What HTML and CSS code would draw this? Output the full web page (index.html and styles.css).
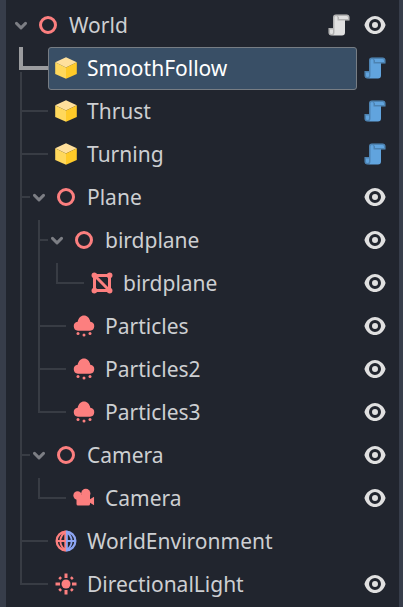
FILE: index.html
```html
<!DOCTYPE html>
<html lang="en">
<head>
<meta charset="utf-8">
<title>Scene tree</title>
<link rel="stylesheet" href="styles.css">
</head>
<body>
<svg class="defs" aria-hidden="true">
  <symbol id="chevron" viewBox="0 0 12 12"><path d="M1.5 3.4 6 7.9l4.500-4.500" fill="none" stroke="#7c7e84" stroke-width="2.900" stroke-linecap="round" stroke-linejoin="round"/></symbol>
  <symbol id="spatial" viewBox="0 0 16 16"><circle cx="8" cy="8" r="5" fill="none" stroke="#fc7f7f" stroke-width="2"/></symbol>
  <symbol id="cube" viewBox="0 0 16 16"><path d="M8 .9 15.200 4.200 8 7.700.8 4.200z" fill="#ffe09c"/><path d="M.8 4.200 8 7.700v7.500L.8 12z" fill="#ffd85c"/><path d="M15.200 4.200 8 7.700v7.500l7.200-3.200z" fill="#ffca28"/></symbol>
  <symbol id="eye" viewBox="0 0 16 16"><path fill="#e0e0e0" d="M8 2C5.443 2 2.209 3.948 1.045 7.705a1 1 0 0 0-.01.56C2.165 12.190 5.385 14 8 14s5.835-1.809 6.965-5.736a1 1 0 0 0 0-.55C13.861 3.935 10.554 2 8 2zm0 2a4 4 0 0 1 0 8 4 4 0 0 1 0-8zm0 2a2 2 0 0 0 0 4 2 2 0 0 0 0-4z"/></symbol>
  <symbol id="script" viewBox="0 0 16 16"><path fill="currentColor" d="M6 1a2 2 0 0 0-2 2v7H1v3a2 2 0 0 0 2 2h7a2 2 0 0 0 2-2V5h3V3a2 2 0 0 0-2-2z"/><path class="fold" fill-rule="evenodd" d="M6 1a2 2 0 0 0-2 2v7H1v3a2 2 0 0 0 4 0V3a1 1 0 0 1 2 0v2h8V3a2 2 0 0 0-2-2zm1 1h6a1 1 0 0 1 1 1v1H8V3a2 2 0 0 0-1-1zM2 11h2v2a1 1 0 0 1-2 0z"/></symbol>
  <symbol id="mesh" viewBox="0 0 16 16"><path fill="#fc7f7f" d="m3 1a2 2 0 0 0-2 2 2 2 0 0 0 1 1.730v6.541a2 2 0 0 0-1 1.729 2 2 0 0 0 2 2 2 2 0 0 0 1.730-1h6.541a2 2 0 0 0 1.729 1 2 2 0 0 0 2-2 2 2 0 0 0-1-1.730v-6.541a2 2 0 0 0 1-1.729 2 2 0 0 0-2-2 2 2 0 0 0-1.730 1h-6.541a2 2 0 0 0-1.729-1zm2.414 3h5.857a2 2 0 0 0 .729.730v5.856zm-1.414 1.414 6.586 6.586h-5.856a2 2 0 0 0-.730-.730z"/></symbol>
  <symbol id="particles" viewBox="0 0 16 16"><g fill="#fc7f7f"><path d="M8 1C5.900 1 4.300 2.700 3.800 5.100A3.070 3.070 0 0 0 4 11.200h8a3.070 3.070 0 0 0 .2-6.100C11.700 2.700 10.100 1 8 1z"/><circle cx="4" cy="13" r="1"/><circle cx="8" cy="14" r="1"/><circle cx="12" cy="13" r="1"/></g></symbol>
  <symbol id="camera" viewBox="0 0 16 16"><g fill="#fc7f7f"><circle cx="9.200" cy="5" r="3.100"/><circle cx="3.700" cy="6.300" r="2.800"/><path d="M3 6h9v2.900l2.700-1.700v5.600L12 11.200V12a1 1 0 0 1-1 1H4a1 1 0 0 1-1-1z"/></g></symbol>
  <symbol id="environment" viewBox="0 0 16 16"><g fill="none" stroke-width="1.500"><path stroke="#fc7f7f" d="M8 1.750a6.250 6.250 0 0 0 0 12.500"/><path stroke="#8da5f3" d="M8 1.750a6.250 6.250 0 0 1 0 12.500"/><g stroke-width="1.250"><path stroke="#fc7f7f" d="M8 1.600C3 5 3 11 8 14.400M2 8h6M7.500 1.100v13.800"/><path stroke="#8da5f3" d="M8 1.600c5 3.400 5 9.400 0 12.800M8 8h6M8.600 1.100v13.800"/></g></g></symbol>
  <symbol id="light" viewBox="0 0 16 16"><g fill="#fc7f7f" stroke="#fc7f7f"><circle cx="8" cy="8" r="3" stroke="none"/><path stroke-width="2" d="M8 1v3M8 12v3M1 8h3M12 8h3"/><path stroke-width="1.800" d="M3.500 3.500l1.200 1.200M11.300 11.300l1.200 1.200M3.500 12.500l1.200-1.200M11.300 4.700l1.200-1.200"/></g></symbol>
</svg>
<main class="panel">
<ul class="tree">
  <li class="node">
    <div class="row"><svg class="toggle"><use href="#chevron"/></svg><div class="item"><svg class="icon"><use href="#spatial"/></svg><span class="name">World</span></div><div class="actions"><svg class="icon"><use href="#script"/></svg><svg class="icon"><use href="#eye"/></svg></div></div>
    <ul class="children">
      <li class="node active">
        <div class="row"><span class="toggle"></span><div class="item selected"><svg class="icon"><use href="#cube"/></svg><span class="name">SmoothFollow</span></div><div class="actions"><svg class="icon blue"><use href="#script"/></svg></div></div>
      </li>
      <li class="node">
        <div class="row"><span class="toggle"></span><div class="item"><svg class="icon"><use href="#cube"/></svg><span class="name">Thrust</span></div><div class="actions"><svg class="icon blue"><use href="#script"/></svg></div></div>
      </li>
      <li class="node">
        <div class="row"><span class="toggle"></span><div class="item"><svg class="icon"><use href="#cube"/></svg><span class="name">Turning</span></div><div class="actions"><svg class="icon blue"><use href="#script"/></svg></div></div>
      </li>
      <li class="node parent">
        <div class="row"><svg class="toggle"><use href="#chevron"/></svg><div class="item"><svg class="icon"><use href="#spatial"/></svg><span class="name">Plane</span></div><div class="actions"><svg class="icon"><use href="#eye"/></svg></div></div>
        <ul class="children">
          <li class="node parent">
            <div class="row"><svg class="toggle"><use href="#chevron"/></svg><div class="item"><svg class="icon"><use href="#spatial"/></svg><span class="name">birdplane</span></div><div class="actions"><svg class="icon"><use href="#eye"/></svg></div></div>
            <ul class="children">
              <li class="node">
                <div class="row"><span class="toggle"></span><div class="item"><svg class="icon"><use href="#mesh"/></svg><span class="name">birdplane</span></div><div class="actions"><svg class="icon"><use href="#eye"/></svg></div></div>
              </li>
            </ul>
          </li>
          <li class="node">
            <div class="row"><span class="toggle"></span><div class="item"><svg class="icon"><use href="#particles"/></svg><span class="name">Particles</span></div><div class="actions"><svg class="icon"><use href="#eye"/></svg></div></div>
          </li>
          <li class="node">
            <div class="row"><span class="toggle"></span><div class="item"><svg class="icon"><use href="#particles"/></svg><span class="name">Particles2</span></div><div class="actions"><svg class="icon"><use href="#eye"/></svg></div></div>
          </li>
          <li class="node">
            <div class="row"><span class="toggle"></span><div class="item"><svg class="icon"><use href="#particles"/></svg><span class="name">Particles3</span></div><div class="actions"><svg class="icon"><use href="#eye"/></svg></div></div>
          </li>
        </ul>
      </li>
      <li class="node parent">
        <div class="row"><svg class="toggle"><use href="#chevron"/></svg><div class="item"><svg class="icon"><use href="#spatial"/></svg><span class="name">Camera</span></div><div class="actions"><svg class="icon"><use href="#eye"/></svg></div></div>
        <ul class="children">
          <li class="node">
            <div class="row"><span class="toggle"></span><div class="item"><svg class="icon"><use href="#camera"/></svg><span class="name">Camera</span></div><div class="actions"><svg class="icon"><use href="#eye"/></svg></div></div>
          </li>
        </ul>
      </li>
      <li class="node">
        <div class="row"><span class="toggle"></span><div class="item"><svg class="icon"><use href="#environment"/></svg><span class="name">WorldEnvironment</span></div><div class="actions"></div></div>
      </li>
      <li class="node">
        <div class="row"><span class="toggle"></span><div class="item"><svg class="icon"><use href="#light"/></svg><span class="name">DirectionalLight</span></div><div class="actions"><svg class="icon"><use href="#eye"/></svg></div></div>
      </li>
    </ul>
  </li>
</ul>
</main>
</body>
</html>
```
FILE: styles.css
```css
*, *::before, *::after { box-sizing: border-box; }
body {
  margin: 0;
  overflow: hidden;
  background: #21252e;
  color: #cdcfd2;
  font: 21px/28px "Noto Sans", sans-serif;
}
.defs { display: none; }
.panel {
  height: 607px;
  padding: 4px 12px 0 9px;
  border-left: 6px solid #373d4a;
  border-right: 4px solid #373d4a;
}
.tree, .children { list-style: none; margin: 0; padding: 0; }
.children { padding-left: 18px; }
.node { position: relative; }
.row { display: flex; height: 43px; }
.toggle { flex: none; width: 12px; height: 12px; margin-top: 16px; }
.item {
  display: flex;
  flex: 1;
  gap: 9px;
  margin-left: 3px;
  padding: 8px 0 0 5px;
  border: 1px solid transparent;
  border-radius: 3px;
}
.selected { background: #394f66; border-color: #777d84; color: #fff; }
.icon { display: block; flex: none; width: 24px; height: 24px; color: #e0e0e0; }
.name { margin-top: -2px; white-space: nowrap; }
.actions { display: flex; gap: 12px; padding-top: 9px; margin-left: 6px; min-width: 24px; }
.blue { color: #61a4de; }
.fold { fill: #000; fill-opacity: .2; }
.blue .fold { fill: #0b3b70; fill-opacity: .3; }

/* Guide lines joining a node to its parent */
.children > .node::before {
  content: "";
  position: absolute;
  left: -13px;
  top: 0;
  width: 2px;
  height: 100%;
  background: #383c44;
}
.children > .node:first-child::before { top: 1px; height: calc(100% - 1px); }
.children > .node:last-child::before { height: 22px; }
.children > .node:only-child::before { height: 21px; }
.children > .node::after {
  content: "";
  position: absolute;
  left: -11px;
  top: 20px;
  width: 26px;
  height: 2px;
  background: #383c44;
}
.children > .parent::after { width: 8px; }
.children > .active:first-child::before {
  top: 25px;
  height: 18px;
}
.children > .active::after {
  left: -14px;
  top: 0;
  width: 29px;
  height: 23px;
  border: solid #9b9c9f;
  border-width: 0 0 4px 4px;
  background: none;
}
```
